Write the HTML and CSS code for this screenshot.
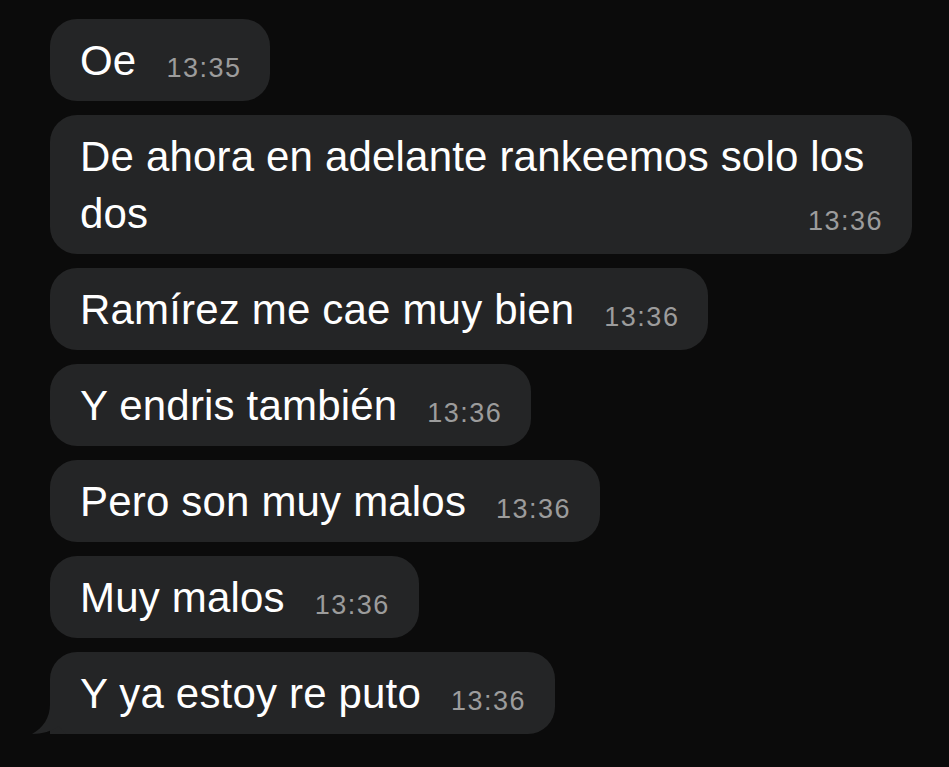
FILE: index.html
```html
<!DOCTYPE html>
<html lang="es">
<head>
  <meta charset="UTF-8">
  <title>Chat</title>
  <link rel="stylesheet" href="styles.css">
</head>
<body>

<div class="chat">
  <div class="msg"><span class="txt">Oe</span><span class="time">13:35</span></div>
  <div class="msg"><span class="txt">De ahora en adelante rankeemos solo los dos</span><span class="time">13:36</span></div>
  <div class="msg"><span class="txt">Ramírez me cae muy bien</span><span class="time">13:36</span></div>
  <div class="msg"><span class="txt">Y endris también</span><span class="time">13:36</span></div>
  <div class="msg"><span class="txt">Pero son muy malos</span><span class="time">13:36</span></div>
  <div class="msg"><span class="txt">Muy malos</span><span class="time">13:36</span></div>
  <div class="msg last">
    <svg class="tail" width="34" height="44" viewBox="0 0 34 44">
      <path d="M18 0 L18 14 C18 28 11 38 0 44 C10 44 20 41 27 36 C30 40 32 42 34 44 L34 0 Z" fill="#242526"/>
    </svg>
    <span class="txt">Y ya estoy re puto</span><span class="time">13:36</span>
  </div>
</div>

</body>
</html>
```

FILE: styles.css
```css
html, body {
  margin: 0;
  background: #0b0b0b;
}
body {
  font-family: "Liberation Sans", Arial, sans-serif;
  color: #fff;
}
.chat {
  display: flex;
  flex-direction: column;
  align-items: flex-start;
  gap: 14px;
  padding: 19px 37px 0 50px;
}
.msg {
  position: relative;
  display: inline-block;
  max-width: 862px;
  box-sizing: border-box;
  background: #242526;
  border-radius: 27px;
  padding: 13px 29px 12px 30px;
  font-size: 42px;
  line-height: 57px;
  letter-spacing: 0.18px;
}
.time {
  float: right;
  margin-left: 30px;
  padding-top: 8px;
  margin-bottom: -8px;
  font-size: 27px;
  line-height: 57px;
  letter-spacing: 1.5px;
  color: #9c9c9c;
}
.last {
  border-bottom-left-radius: 0;
}
.tail {
  position: absolute;
  left: -18px;
  bottom: 0;
}
```
